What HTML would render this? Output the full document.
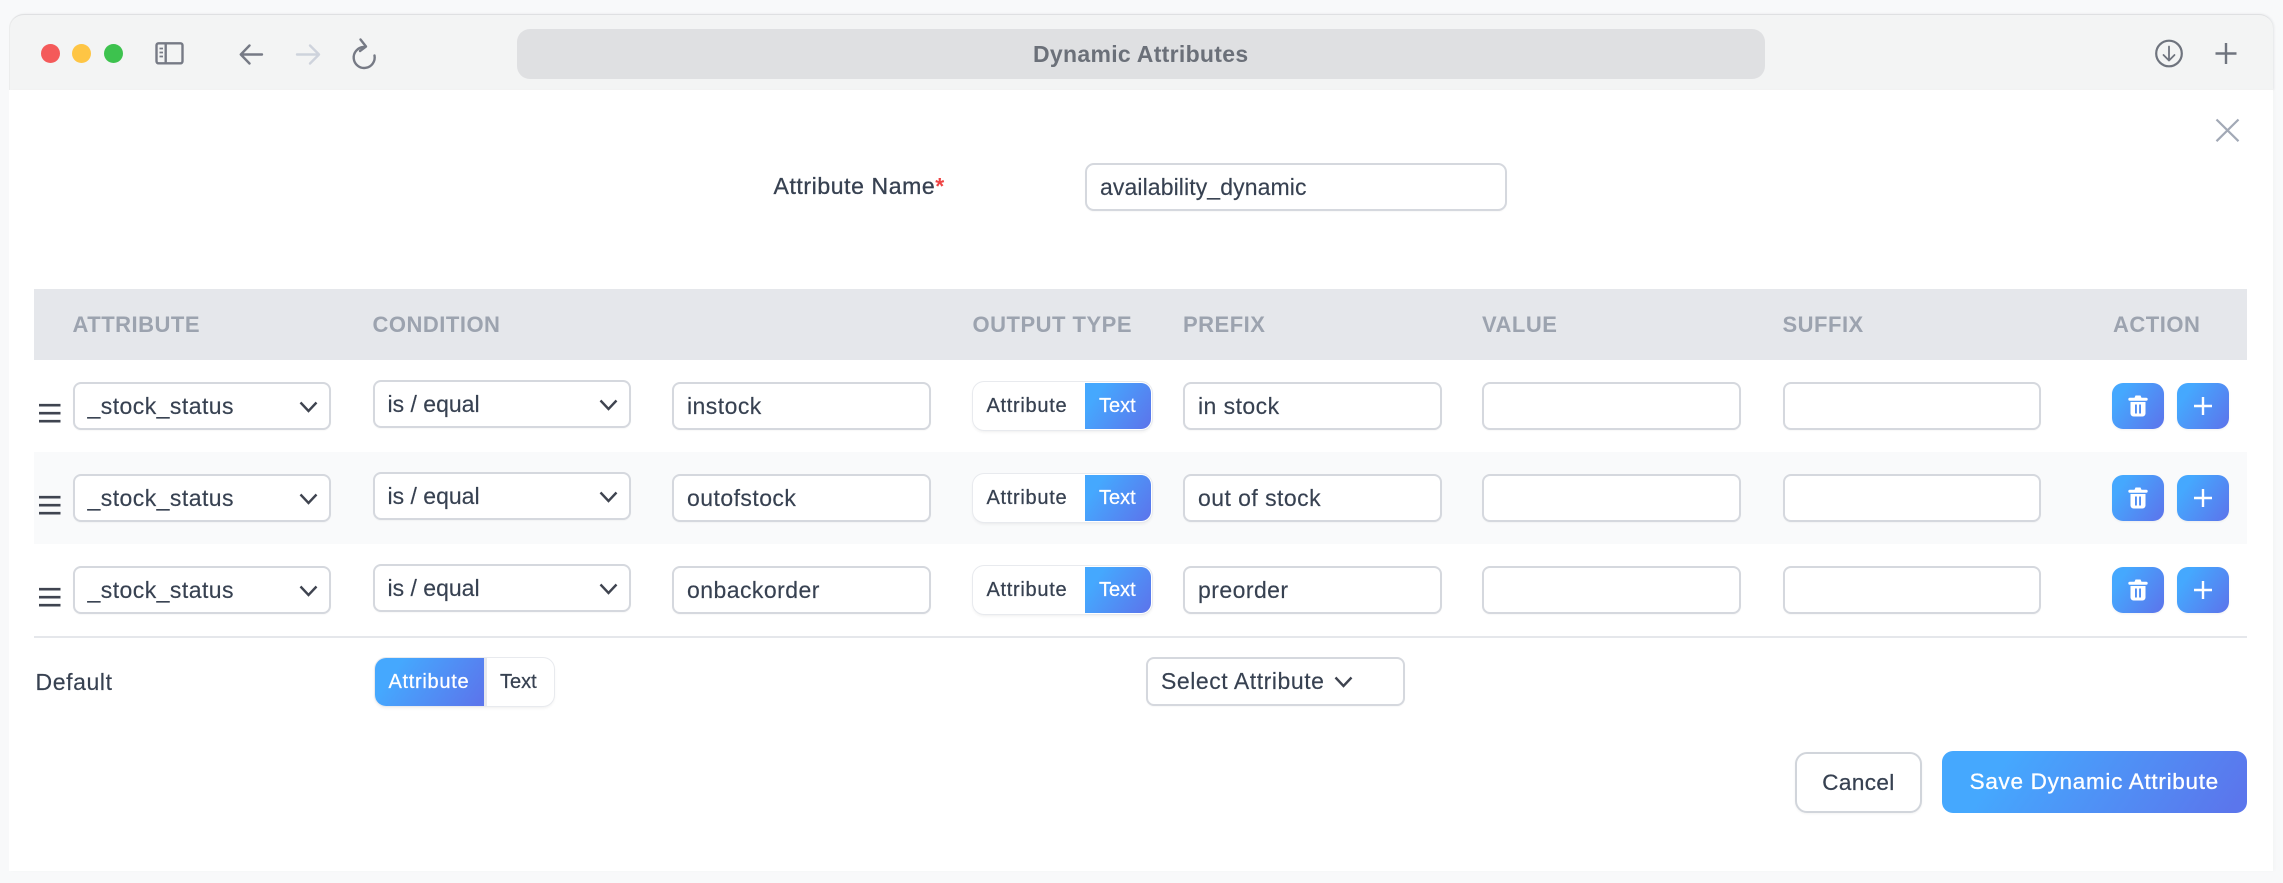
<!DOCTYPE html>
<html><head><meta charset="utf-8"><style>
html,body{margin:0;padding:0}
body{width:2283px;height:883px;position:relative;overflow:hidden;background:#f8f9fa;font-family:"Liberation Sans",sans-serif;color:#374151}
.a{position:absolute;box-sizing:border-box}
.f{position:absolute;box-sizing:border-box;background:#fff;border:2px solid #d5d8de;border-radius:8px;height:48px;font-size:23px;letter-spacing:.45px;line-height:44px;padding-left:13px;white-space:nowrap;box-shadow:0 1px 1px rgba(0,0,0,.03);-webkit-text-stroke:.15px #374151}
.c{letter-spacing:0}
.h{position:absolute;top:311px;font-size:22px;font-weight:bold;line-height:28px;letter-spacing:.5px;color:#9ca3af;white-space:nowrap}
.g{background:linear-gradient(125deg,#45a8fe 20%,#5b76ec 95%)}
.tg{position:absolute;box-sizing:border-box;width:179px;height:48px;background:#fff;border-radius:11px;box-shadow:0 0 0 1px #e8eaee,0 2px 3px rgba(0,0,0,.07)}
.tg span{position:absolute;top:1px;line-height:47px;font-size:20px;white-space:nowrap;-webkit-text-stroke:.25px currentColor}
.btn{position:absolute;box-sizing:border-box;width:52px;height:46px;border-radius:11px;box-shadow:0 1px 2px rgba(0,0,0,.06)}
svg{position:absolute;overflow:visible}
</style></head><body>
<div class="a" style="left:10px;top:13.5px;width:2263px;height:76.5px;background:#f3f4f4;border-radius:14px 14px 0 0;border-top:1.5px solid #dfe0e2;box-shadow:-1px 0 0 #eceded,1px 0 2px #e4e6e8"></div>
<div class="a" style="left:9px;top:90px;width:2264px;height:781px;background:#fff;box-shadow:2px 0 3px rgba(0,0,0,.02)"></div>

<div class="a" style="left:40.5px;top:44px;width:19px;height:19px;border-radius:50%;background:#f45a5a"></div>
<div class="a" style="left:72px;top:44px;width:19px;height:19px;border-radius:50%;background:#fec544"></div>
<div class="a" style="left:103.5px;top:44px;width:19px;height:19px;border-radius:50%;background:#3dc24e"></div>

<svg style="left:0;top:0" width="400" height="90" fill="none" stroke="#767a85" stroke-width="2.4">
<rect x="156.5" y="43.3" width="26" height="20" rx="2"/><path d="M165.7 43v21"/>
<path d="M159.5 48.5h3.5M159.5 52.5h3.5M159.5 56.5h3.5" stroke-width="1.7"/>
<path d="M262 54.5H241M249.5 45.5L240.8 54.5L249.5 63.5" stroke-linecap="round" stroke-linejoin="round"/>
<path d="M297 54.5H318M310 45.5L319 54.5L310 63.5" stroke="#ced3dc" stroke-linecap="round" stroke-linejoin="round"/>
<path d="M364 46.5A10.5 10.5 0 1 0 375 55" stroke-linecap="round" transform="translate(-.5 .5)"/>
<path d="M360.5 39.5L366 46.5L360 51" stroke-linecap="round" stroke-linejoin="round"/>
</svg>

<div class="a" style="left:517px;top:29px;width:1248px;height:49.5px;background:#dfe0e2;border-radius:13px"></div>
<div class="a" style="left:1033px;top:37px;font-size:23px;font-weight:bold;line-height:34px;color:#6b7079;white-space:nowrap;letter-spacing:.3px">Dynamic Attributes</div>

<svg style="left:2140px;top:30px" width="110" height="50" fill="none" stroke="#6f747e" stroke-width="2.2">
<circle cx="29" cy="23.5" r="12.8"/><path d="M29 16.5V30M23.5 25L29 30.5L34.5 25" stroke-width="1.8" stroke-linecap="round" stroke-linejoin="round"/>
<path d="M86 13V34M75.5 23.5H96.5" stroke-width="2.4"/>
</svg>
<svg style="left:2210px;top:112px" width="36" height="36" fill="none" stroke="#a2a9b6" stroke-width="2.2"><path d="M6.5 7.5L28.5 29.2M28.5 7.5L6.5 29.2"/></svg>

<div class="a" style="left:773.5px;top:170px;font-size:23px;line-height:33px;white-space:nowrap;-webkit-text-stroke:.3px #374151;letter-spacing:.6px">Attribute Name<span style="color:#ef4444;font-weight:bold;-webkit-text-stroke:0">*</span></div>
<div class="f" style="left:1085px;top:162.5px;width:422px;height:48.5px;letter-spacing:.1px;border-radius:9px">availability_dynamic</div>

<div class="a" style="left:33.5px;top:288.5px;width:2213.5px;height:71px;background:#e5e7eb"></div>
<div class="a" style="left:33.5px;top:451.5px;width:2213.5px;height:92.5px;background:#f9fafb"></div>
<div class="h" style="left:72.5px">ATTRIBUTE</div>
<div class="h" style="left:372.5px">CONDITION</div>
<div class="h" style="left:972.5px">OUTPUT TYPE</div>
<div class="h" style="left:1183px">PREFIX</div>
<div class="h" style="left:1482px">VALUE</div>
<div class="h" style="left:1782.5px">SUFFIX</div>
<div class="h" style="left:2113px">ACTION</div>

<!-- row 1 -->
<svg style="left:38px;top:400px" width="24" height="26" stroke="#3f4450" stroke-width="2.6"><path d="M1 5.2H22.5M1 13.2H22.5M1 21.2H22.5"/></svg>
<div class="f" style="left:72.5px;top:382px;width:258.5px">_stock_status</div>
<svg style="left:298px;top:400px" width="20" height="14" fill="none" stroke="#3f4450" stroke-width="2.4"><path d="M2.5 2.5L10.5 11L18.5 2.5"/></svg>
<div class="f c" style="left:372.5px;top:379.5px;width:258.5px">is / equal</div>
<svg style="left:598px;top:397.5px" width="20" height="14" fill="none" stroke="#3f4450" stroke-width="2.4"><path d="M2.5 2.5L10.5 11L18.5 2.5"/></svg>
<div class="f" style="left:672px;top:382px;width:259px">instock</div>
<div class="tg" style="left:972.5px;top:382px"><span style="left:14px;letter-spacing:.7px">Attribute</span><div class="a g" style="left:112px;top:1px;width:66.5px;height:46px;border-radius:0 10px 10px 0"></div><span style="left:126.5px;color:#fff">Text</span></div>
<div class="f" style="left:1183px;top:382px;width:258.5px">in stock</div>
<div class="f" style="left:1482px;top:382px;width:259px"></div>
<div class="f" style="left:1782.5px;top:382px;width:258.5px"></div>
<div class="btn g" style="left:2112px;top:383px"><svg style="left:16px;top:12px" width="20" height="23" fill="#fff"><path d="M7.5.5h5l1 2.2h4.7a1.2 1.2 0 0 1 0 3H1.8a1.2 1.2 0 0 1 0-3h4.7zM2.5 7h15v11.5a3 3 0 0 1-3 3h-9a3 3 0 0 1-3-3z"/><path d="M7 9.5v9h1.9v-9zM11.1 9.5v9H13v-9z" fill="#4f8df3"/></svg></div>
<div class="btn g" style="left:2177px;top:383px"><svg style="left:17px;top:13.5px" width="18" height="18" stroke="#fff" stroke-width="2.4"><path d="M9 0V18M0 9H18"/></svg></div>

<!-- row 2 -->
<svg style="left:38px;top:492px" width="24" height="26" stroke="#3f4450" stroke-width="2.6"><path d="M1 5.2H22.5M1 13.2H22.5M1 21.2H22.5"/></svg>
<div class="f" style="left:72.5px;top:474.3px;width:258.5px">_stock_status</div>
<svg style="left:298px;top:492.3px" width="20" height="14" fill="none" stroke="#3f4450" stroke-width="2.4"><path d="M2.5 2.5L10.5 11L18.5 2.5"/></svg>
<div class="f c" style="left:372.5px;top:471.8px;width:258.5px">is / equal</div>
<svg style="left:598px;top:489.8px" width="20" height="14" fill="none" stroke="#3f4450" stroke-width="2.4"><path d="M2.5 2.5L10.5 11L18.5 2.5"/></svg>
<div class="f" style="left:672px;top:474.3px;width:259px">outofstock</div>
<div class="tg" style="left:972.5px;top:474.3px"><span style="left:14px;letter-spacing:.7px">Attribute</span><div class="a g" style="left:112px;top:1px;width:66.5px;height:46px;border-radius:0 10px 10px 0"></div><span style="left:126.5px;color:#fff">Text</span></div>
<div class="f" style="left:1183px;top:474.3px;width:258.5px">out of stock</div>
<div class="f" style="left:1482px;top:474.3px;width:259px"></div>
<div class="f" style="left:1782.5px;top:474.3px;width:258.5px"></div>
<div class="btn g" style="left:2112px;top:475.3px"><svg style="left:16px;top:12px" width="20" height="23" fill="#fff"><path d="M7.5.5h5l1 2.2h4.7a1.2 1.2 0 0 1 0 3H1.8a1.2 1.2 0 0 1 0-3h4.7zM2.5 7h15v11.5a3 3 0 0 1-3 3h-9a3 3 0 0 1-3-3z"/><path d="M7 9.5v9h1.9v-9zM11.1 9.5v9H13v-9z" fill="#4f8df3"/></svg></div>
<div class="btn g" style="left:2177px;top:475.3px"><svg style="left:17px;top:13.5px" width="18" height="18" stroke="#fff" stroke-width="2.4"><path d="M9 0V18M0 9H18"/></svg></div>

<!-- row 3 -->
<svg style="left:38px;top:584px" width="24" height="26" stroke="#3f4450" stroke-width="2.6"><path d="M1 5.2H22.5M1 13.2H22.5M1 21.2H22.5"/></svg>
<div class="f" style="left:72.5px;top:566.3px;width:258.5px">_stock_status</div>
<svg style="left:298px;top:584.3px" width="20" height="14" fill="none" stroke="#3f4450" stroke-width="2.4"><path d="M2.5 2.5L10.5 11L18.5 2.5"/></svg>
<div class="f c" style="left:372.5px;top:564px;width:258.5px">is / equal</div>
<svg style="left:598px;top:582px" width="20" height="14" fill="none" stroke="#3f4450" stroke-width="2.4"><path d="M2.5 2.5L10.5 11L18.5 2.5"/></svg>
<div class="f" style="left:672px;top:566.3px;width:259px">onbackorder</div>
<div class="tg" style="left:972.5px;top:566.3px"><span style="left:14px;letter-spacing:.7px">Attribute</span><div class="a g" style="left:112px;top:1px;width:66.5px;height:46px;border-radius:0 10px 10px 0"></div><span style="left:126.5px;color:#fff">Text</span></div>
<div class="f" style="left:1183px;top:566.3px;width:258.5px">preorder</div>
<div class="f" style="left:1482px;top:566.3px;width:259px"></div>
<div class="f" style="left:1782.5px;top:566.3px;width:258.5px"></div>
<div class="btn g" style="left:2112px;top:567.3px"><svg style="left:16px;top:12px" width="20" height="23" fill="#fff"><path d="M7.5.5h5l1 2.2h4.7a1.2 1.2 0 0 1 0 3H1.8a1.2 1.2 0 0 1 0-3h4.7zM2.5 7h15v11.5a3 3 0 0 1-3 3h-9a3 3 0 0 1-3-3z"/><path d="M7 9.5v9h1.9v-9zM11.1 9.5v9H13v-9z" fill="#4f8df3"/></svg></div>
<div class="btn g" style="left:2177px;top:567.3px"><svg style="left:17px;top:13.5px" width="18" height="18" stroke="#fff" stroke-width="2.4"><path d="M9 0V18M0 9H18"/></svg></div>

<!-- default -->
<div class="a" style="left:33.5px;top:635.5px;width:2213.5px;height:2px;background:#e5e7eb"></div>
<div class="a" style="left:35.5px;top:665px;font-size:23px;line-height:34px;letter-spacing:.6px;white-space:nowrap;-webkit-text-stroke:.15px #374151">Default</div>
<div class="tg" style="left:375px;top:658px;background:#fff">
<div class="a g" style="left:0;top:0;width:108.5px;height:48px;border-radius:11px 0 0 11px"></div>
<div class="a" style="left:108.5px;top:0;width:3px;height:48px;background:#e6e8ee"></div>
<span style="left:13.5px;color:#fff;letter-spacing:.7px">Attribute</span><span style="left:125px">Text</span></div>
<div class="f" style="left:1146px;top:657px;width:259px;height:49px;line-height:45px;letter-spacing:.55px">Select Attribute</div>
<svg style="left:1333px;top:674.5px" width="20" height="14" fill="none" stroke="#3f4450" stroke-width="2.4"><path d="M2.5 2.5L10.5 11L18.5 2.5"/></svg>

<!-- footer -->
<div class="a" style="left:1795px;top:751.5px;width:127px;height:61px;background:#fff;border:2px solid #d1d5db;border-radius:12px;text-align:center;line-height:58px;font-size:22.5px;letter-spacing:.4px;-webkit-text-stroke:.25px #374151;box-shadow:0 1px 2px rgba(0,0,0,.05)">Cancel</div>
<div class="a g" style="left:1941.5px;top:751px;width:305.5px;height:62px;border-radius:11px;text-align:center;line-height:62px;font-size:22.5px;letter-spacing:.7px;color:#fff;-webkit-text-stroke:.3px #fff">Save Dynamic Attribute</div>
</body></html>
